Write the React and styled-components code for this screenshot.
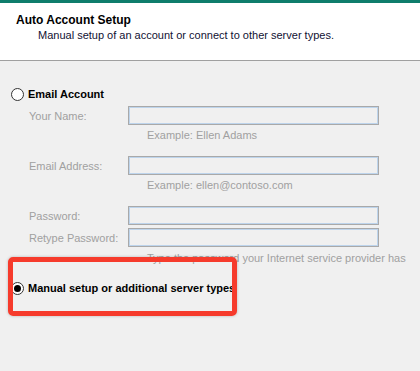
import React from "react";
import styled, { createGlobalStyle } from "styled-components";

const Global = createGlobalStyle`
  html, body { margin: 0; padding: 0; }
  body {
    background: #f0f0f0;
    font-family: "Liberation Sans", Arial, sans-serif;
    font-size: 11px;
    color: #000;
  }
`;

const Page = styled.div`
  position: relative;
  width: 420px;
  height: 371px;
  overflow: hidden;
  background: #f0f0f0;
`;

const TopBar = styled.div`
  height: 3px;
  background: #0f7d6c;
`;

const Header = styled.header`
  height: 58px;
  background: #ffffff;
  border-bottom: 1px solid #a0a0a0;
  padding: 10px 0 0 16px;
  box-sizing: border-box;
  display: flex;
  flex-direction: column;
`;

const Title = styled.div`
  font-weight: 700;
  font-size: 12px;
  line-height: 15px;
`;

const Subtitle = styled.div`
  line-height: 15px;
  padding-left: 22px;
  color: #111133;
`;

const Body = styled.main`
  display: flex;
  flex-direction: column;
  padding: 25px 0 0 11px;
`;

const RadioRow = styled.label`
  display: flex;
  align-items: center;
  gap: 4px;
  height: 16px;
  font-weight: 700;
  white-space: nowrap;
  margin-top: ${(p) => p.$top || 0}px;
`;

const RadioCircle = styled.span`
  width: 13px;
  height: 13px;
  box-sizing: border-box;
  border-radius: 50%;
  border: 1px solid #333;
  background: #fff;
  display: flex;
  align-items: center;
  justify-content: center;
  flex: none;
  &::after {
    content: "";
    width: 7px;
    height: 7px;
    border-radius: 50%;
    background: ${(p) => (p.$checked ? "#000" : "transparent")};
  }
`;

const FieldRow = styled.div`
  display: flex;
  align-items: center;
  margin-top: ${(p) => p.$top || 0}px;
`;

const Label = styled.span`
  width: 99px;
  padding-left: 18px;
  box-sizing: border-box;
  flex: none;
  color: #a0a0a0;
  white-space: nowrap;
`;

const Input = styled.div`
  width: 251px;
  height: 19px;
  box-sizing: border-box;
  border: 1px solid #a9a9a9;
  box-shadow: inset 0 0 0 1px #bdd4ec;
  background: #f0f0f0;
  margin-left: 18px;
`;

const Hint = styled.div`
  padding-left: 136px;
  line-height: 16px;
  color: #a0a0a0;
  white-space: nowrap;
  margin-top: ${(p) => p.$top || 0}px;
`;

const Highlight = styled.div`
  position: absolute;
  left: 8px;
  top: 257px;
  width: 229px;
  height: 59px;
  box-sizing: border-box;
  border: 5px solid #f63b2c;
  border-radius: 5px;
  box-shadow: 0 0 3px rgba(0, 0, 0, 0.25);
  pointer-events: none;
`;

export default function App() {
  return (
    <Page>
      <Global />
      <TopBar />
      <Header>
        <Title>Auto Account Setup</Title>
        <Subtitle>Manual setup of an account or connect to other server types.</Subtitle>
      </Header>
      <Body>
        <RadioRow>
          <RadioCircle />
          Email Account
        </RadioRow>
        <FieldRow $top={4}>
          <Label>Your Name:</Label>
          <Input />
        </FieldRow>
        <Hint $top={2}>Example: Ellen Adams</Hint>
        <FieldRow $top={13}>
          <Label>Email Address:</Label>
          <Input />
        </FieldRow>
        <Hint $top={2}>Example: ellen@contoso.com</Hint>
        <FieldRow $top={13}>
          <Label>Password:</Label>
          <Input />
        </FieldRow>
        <FieldRow $top={3}>
          <Label>Retype Password:</Label>
          <Input />
        </FieldRow>
        <Hint $top={3}>Type the password your Internet service provider has</Hint>
        <RadioRow $top={14}>
          <RadioCircle $checked />
          Manual setup or additional server types
        </RadioRow>
      </Body>
      <Highlight />
    </Page>
  );
}
